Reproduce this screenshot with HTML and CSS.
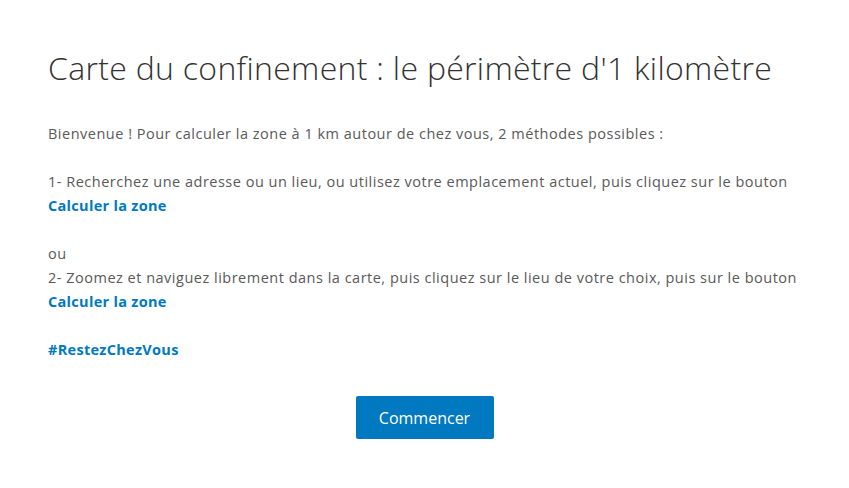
FILE: index.html
```html
<!DOCTYPE html>
<html lang="fr">
<head>
<meta charset="utf-8">
<link rel="stylesheet" href="styles.css">
</head>
<body>
<div class="page">
  <h1 class="title">Carte du confinement : le périmètre d'1 kilomètre</h1>
  <div class="content">
    <p>Bienvenue ! Pour calculer la zone à 1 km autour de chez vous, 2 méthodes possibles :</p>
    <p class="blank">&nbsp;</p>
    <p>1- Recherchez une adresse ou un lieu, ou utilisez votre emplacement actuel, puis cliquez sur le bouton</p>
    <p class="link">Calculer la zone</p>
    <p class="blank">&nbsp;</p>
    <p>ou</p>
    <p>2- Zoomez et naviguez librement dans la carte, puis cliquez sur le lieu de votre choix, puis sur le bouton</p>
    <p class="link">Calculer la zone</p>
    <p class="blank">&nbsp;</p>
    <p class="link">#RestezChezVous</p>
  </div>
  <div class="actions">
    <button class="btn">Commencer</button>
  </div>
</div>
</body>
</html>
```

FILE: styles.css
```css
html, body {
  margin: 0;
  padding: 0;
  background: #ffffff;
}
.page {
  padding: 46px 48px 0 48px;
  font-family: "Open Sans", "Lato", sans-serif;
  color: #595959;
}
.title {
  margin: 0 0 32px 0;
  font-weight: 300;
  font-size: 32px;
  letter-spacing: 0.3px;
  line-height: 44px;
  color: #323232;
}
.content p {
  margin: 0;
  font-size: 14.5px;
  letter-spacing: 0.5px;
  line-height: 24px;
}
.content .link {
  color: #0079c1;
  font-weight: 700;
  letter-spacing: 0.3px;
}
.actions {
  display: flex;
  justify-content: center;
  margin-top: 34px;
}
.btn {
  width: 138px;
  height: 43px;
  border: none;
  border-radius: 2px;
  background: #0079c1;
  color: #ffffff;
  font-family: "Open Sans", sans-serif;
  font-size: 16px;
}
```
